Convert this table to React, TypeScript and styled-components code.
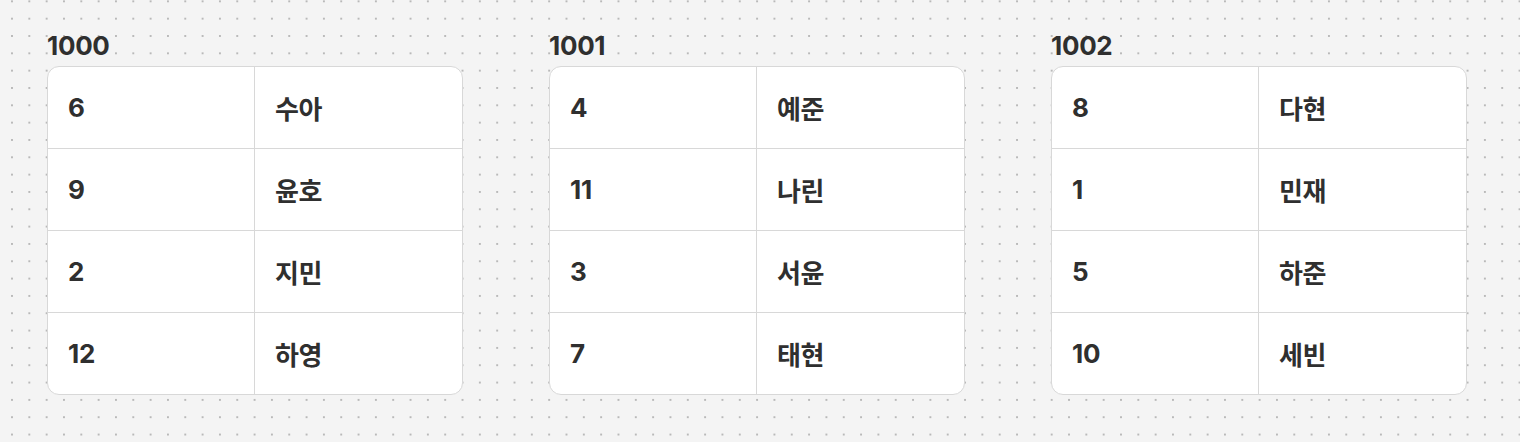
import React from "react";
import styled, { createGlobalStyle } from "styled-components";

const Global = createGlobalStyle`
  html, body { margin: 0; padding: 0; }
  body {
    width: 1520px;
    height: 442px;
    overflow: hidden;
    background-color: #f4f4f4;
    background-image: radial-gradient(circle, #b9b9b9 1px, transparent 1.3px);
    background-size: 17.333px 17.333px;
    background-position: 3.33px 10px;
    font-family: Inter, "Noto Sans CJK KR", sans-serif;
    color: #2f2f2f;
  }
`;

const Page = styled.div`
  display: flex;
  gap: 86px;
  padding: 31px 0 0 47px;
`;

const Group = styled.section`
  display: flex;
  flex-direction: column;
  width: 416px;
`;

const Label = styled.div`
  font-size: 26px;
  font-weight: 700;
  line-height: 30px;
  height: 35px;
  letter-spacing: -0.3px;
`;

const Table = styled.div`
  display: flex;
  flex-direction: column;
  height: 329px;
  box-sizing: border-box;
  background: #fff;
  border: 1px solid #d8d8d8;
  border-radius: 12px;
  overflow: hidden;
`;

const Row = styled.div`
  flex: 1;
  display: grid;
  grid-template-columns: 207px 1fr;
  & + & { border-top: 1px solid #d8d8d8; }
`;

const Cell = styled.div<{ $first?: boolean }>`
  display: flex;
  align-items: center;
  padding-left: 20px;
  font-size: 26px;
  font-weight: 700;
  letter-spacing: -0.3px;
  ${(p) => (p.$first ? "border-right: 1px solid #d8d8d8;" : "")}
`;

const data: [string, [string, string][]][] = [
  ["1000", [["6", "수아"], ["9", "윤호"], ["2", "지민"], ["12", "하영"]]],
  ["1001", [["4", "예준"], ["11", "나린"], ["3", "서윤"], ["7", "태현"]]],
  ["1002", [["8", "다현"], ["1", "민재"], ["5", "하준"], ["10", "세빈"]]],
];

export default function App() {
  return (
    <>
      <Global />
      <Page>
        {data.map(([label, rows]) => (
          <Group key={label}>
            <Label>{label}</Label>
            <Table>
              {rows.map(([n, name]) => (
                <Row key={n}>
                  <Cell $first>{n}</Cell>
                  <Cell>{name}</Cell>
                </Row>
              ))}
            </Table>
          </Group>
        ))}
      </Page>
    </>
  );
}
